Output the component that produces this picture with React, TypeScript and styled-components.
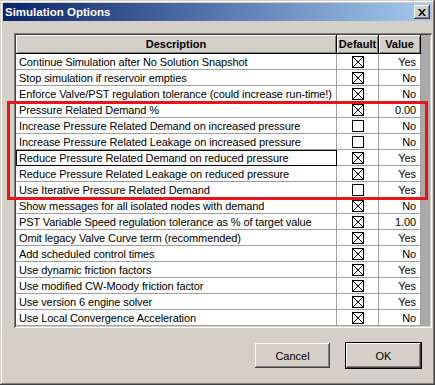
import React from "react";
import styled, { createGlobalStyle } from "styled-components";

const FACE = "#d4d0c8";

const GlobalStyle = createGlobalStyle`
  html, body { margin: 0; padding: 0; background: ${FACE}; }
  body { font-family: "Liberation Sans", Arial, sans-serif; font-size: 11px; }
  * { box-sizing: border-box; }
`;

const Window = styled.div`
  position: relative;
  width: 435px;
  height: 385px;
  background: ${FACE};
  padding: 3px;
  display: flex;
  flex-direction: column;
  box-shadow: inset -1px -1px #404040, inset 1px 1px ${FACE},
    inset -2px -2px #808080, inset 2px 2px #ffffff;
`;

const TitleBar = styled.div`
  height: 18px;
  display: flex;
  align-items: center;
  justify-content: space-between;
  padding: 0 2px 0 2px;
  background: linear-gradient(to right, #0a246a, #a6caf0);
`;

const TitleText = styled.span`
  color: #fff;
  font-weight: bold;
  font-size: 11.5px;
  letter-spacing: 0;
`;

const CloseButton = styled.div`
  width: 16px;
  height: 14px;
  background: ${FACE};
  display: flex;
  align-items: center;
  justify-content: center;
  box-shadow: inset -1px -1px #404040, inset 1px 1px #ffffff,
    inset -2px -2px #808080, inset 2px 2px ${FACE};
`;

const Content = styled.div`
  flex: 1;
  display: flex;
  flex-direction: column;
  padding: 12px 0 0 11px;
`;

const Grid = styled.div`
  width: 418px;
  padding: 2px;
  background: #a9a9a9;
  box-shadow: inset 1px 1px #808080, inset -1px -1px #ffffff,
    inset 2px 2px #404040, inset -2px -2px ${FACE};
`;

const Row = styled.div<{ $header?: boolean }>`
  display: grid;
  grid-template-columns: 321px 42px 42px;
  height: ${(p) => (p.$header ? 19 : 16)}px;
`;

const HeaderCell = styled.div`
  background: ${FACE};
  border-right: 1px solid #000;
  border-bottom: 1px solid #000;
  box-shadow: inset 1px 1px #ffffff, inset -1px -1px #808080;
  display: flex;
  align-items: center;
  justify-content: center;
  font-weight: bold;
  font-size: 11px;
  color: #000;
`;

const Cell = styled.div<{ $align?: "left" | "center" | "right"; $focused?: boolean }>`
  background: #fff;
  border-right: 1px solid #a0a0a0;
  border-bottom: 1px solid #a0a0a0;
  display: flex;
  align-items: center;
  justify-content: ${(p) =>
    p.$align === "right" ? "flex-end" : p.$align === "center" ? "center" : "flex-start"};
  padding: ${(p) => (p.$align === "right" ? "0 4px 0 0" : p.$align === "center" ? "0" : "0 0 0 3px")};
  color: #000;
  white-space: nowrap;
  overflow: hidden;
  letter-spacing: -0.1px;
  outline: ${(p) => (p.$focused ? "1px solid #000" : "none")};
  outline-offset: -1px;
`;

const CheckBox = styled.span`
  width: 12px;
  height: 12px;
  border: 1px solid #000;
  background: #fff;
  display: block;
  margin-top: 1px;
`;

const Highlight = styled.div`
  position: absolute;
  left: 7px;
  top: 101px;
  width: 421px;
  height: 99px;
  border: 3px solid #e8141a;
  pointer-events: none;
`;

const ButtonRow = styled.div`
  display: flex;
  justify-content: flex-end;
  align-items: center;
  gap: 15px;
  margin-top: 14px;
  padding-right: 10px;
  height: 27px;
`;

const Button = styled.div<{ $default?: boolean }>`
  width: ${(p) => (p.$default ? 77 : 75)}px;
  height: ${(p) => (p.$default ? 27 : 25)}px;
  background: ${FACE};
  border: ${(p) => (p.$default ? "1px solid #000" : "none")};
  display: flex;
  align-items: center;
  justify-content: center;
  font-size: 11px;
  color: #000;
  box-shadow: inset -1px -1px #404040, inset 1px 1px #ffffff,
    inset -2px -2px #808080, inset 2px 2px ${FACE};
`;

type Option = { text: string; checked: boolean; value: string };

const options: Option[] = [
  { text: "Continue Simulation after No Solution Snapshot", checked: true, value: "Yes" },
  { text: "Stop simulation if reservoir empties", checked: true, value: "No" },
  { text: "Enforce Valve/PST regulation tolerance (could increase run-time!)", checked: true, value: "No" },
  { text: "Pressure Related Demand %", checked: true, value: "0.00" },
  { text: "Increase Pressure Related Demand on increased pressure", checked: false, value: "No" },
  { text: "Increase Pressure Related Leakage on increased pressure", checked: false, value: "No" },
  { text: "Reduce Pressure Related Demand on reduced pressure", checked: true, value: "Yes" },
  { text: "Reduce Pressure Related Leakage on reduced pressure", checked: true, value: "Yes" },
  { text: "Use Iterative Pressure Related Demand", checked: false, value: "Yes" },
  { text: "Show messages for all isolated nodes with demand", checked: true, value: "No" },
  { text: "PST Variable Speed regulation tolerance as % of target value", checked: true, value: "1.00" },
  { text: "Omit legacy Valve Curve term (recommended)", checked: true, value: "Yes" },
  { text: "Add scheduled control times", checked: true, value: "No" },
  { text: "Use dynamic friction factors", checked: true, value: "Yes" },
  { text: "Use modified CW-Moody friction factor", checked: true, value: "Yes" },
  { text: "Use version 6 engine solver", checked: true, value: "Yes" },
  { text: "Use Local Convergence Acceleration", checked: true, value: "No" },
];

const CloseGlyph = () => (
  <svg width="8" height="7" viewBox="0 0 8 7">
    <path d="M0 0h2l2 2.4L6 0h2L5 3.5 8 7H6L4 4.6 2 7H0l3-3.5z" fill="#000" />
  </svg>
);

const Check = ({ checked }: { checked: boolean }) => (
  <CheckBox>
    {checked && (
      <svg width="10" height="10" viewBox="0 0 10 10" style={{ display: "block" }}>
        <path d="M0 0L10 10M10 0L0 10" stroke="#000" strokeWidth="1" />
      </svg>
    )}
  </CheckBox>
);

export default function App() {
  return (
    <>
      <GlobalStyle />
      <Window>
        <TitleBar>
          <TitleText>Simulation Options</TitleText>
          <CloseButton>
            <CloseGlyph />
          </CloseButton>
        </TitleBar>
        <Content>
          <Grid>
            <Row $header>
              <HeaderCell>Description</HeaderCell>
              <HeaderCell>Default</HeaderCell>
              <HeaderCell>Value</HeaderCell>
            </Row>
            {options.map((o, i) => (
              <Row key={i}>
                <Cell $focused={i === 6}>{o.text}</Cell>
                <Cell $align="center">
                  <Check checked={o.checked} />
                </Cell>
                <Cell $align="right">{o.value}</Cell>
              </Row>
            ))}
          </Grid>
          <ButtonRow>
            <Button>Cancel</Button>
            <Button $default>OK</Button>
          </ButtonRow>
        </Content>
        <Highlight />
      </Window>
    </>
  );
}
